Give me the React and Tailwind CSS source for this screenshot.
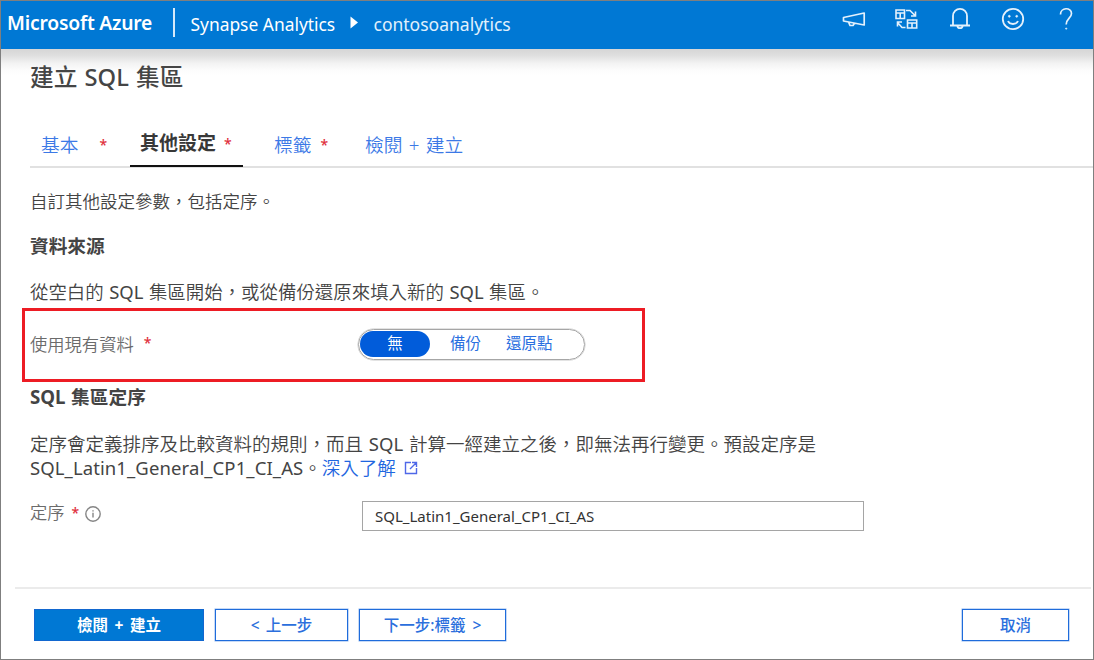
import React from 'react';

function MegaphoneIcon() {
  return (
    <svg width="26" height="22" viewBox="0 0 26 22" fill="none" stroke="#e4f1fc" strokeWidth="1.7" strokeLinejoin="round">
      <path d="M23.200 5V17L2.500 13V9.500ZM7.500 14L9 17.500H12L13.500 15.200" />
    </svg>
  );
}

function DirectoryIcon() {
  return (
    <svg width="24" height="22" viewBox="0 0 24 22" fill="none" stroke="#e4f1fc" strokeWidth="1.6">
      <path d="M2 2H10.500V10.500H2ZM2 5H10.500M6.200 5V10.500M13.5 12H22.7V20H13.5ZM13.5 15H22.7M18 15V20" />
      <path d="M12 2.500H16L21 7.500M21.500 3.500V8H17M11.500 19.500H8L4 15M3.500 18.500V14H8" />
    </svg>
  );
}

function BellIcon() {
  return (
    <svg width="22" height="24" viewBox="0 0 22 24" fill="none" stroke="#e4f1fc" strokeWidth="1.800">
      <path d="M4 18.5V9A7 7.200 0 0 1 18 9V18.5M1 18.5H21M8.3 19A2.8 3 0 0 0 13.7 19" />
    </svg>
  );
}

function SmileIcon() {
  return (
    <svg width="24" height="24" viewBox="0 0 24 24" fill="none" stroke="#e4f1fc" strokeWidth="1.800">
      <circle cx="12" cy="12" r="10.2" />
      <path d="M7 14C8.5 18 15.500 18 17 14" />
      <circle cx="8.300" cy="9.300" r="1" fill="#e4f1fc" strokeWidth="0.6" />
      <circle cx="15.700" cy="9.300" r="1" fill="#e4f1fc" strokeWidth="0.6" />
    </svg>
  );
}

function HelpIcon() {
  return (
    <svg width="16" height="24" viewBox="0 0 16 24" fill="none" stroke="#e4f1fc" strokeWidth="1.7">
      <path d="M2.500 7.500C2.500 0 13.500 0 13.500 6.500C13.500 11 8.200 11.500 8.200 17.500" />
      <circle cx="8.200" cy="21.600" r="0.7" fill="#e4f1fc" strokeWidth="0.6" />
    </svg>
  );
}

function ExternalIcon() {
  return (
    <svg className="ml-[8px] shrink-0" width="14" height="14" viewBox="0 0 14 14" fill="none" stroke="#4f68e8" strokeWidth="1.4">
      <path d="M7 1.500H1.500V12.500H12.500V7M8 1.500H12.500V6M12.500 1.500L6 8" />
    </svg>
  );
}

function InfoIcon() {
  return (
    <svg className="mt-[3px] shrink-0" width="16" height="16" viewBox="0 0 16 16" fill="none" stroke="#858585" strokeWidth="1.4">
      <circle cx="8" cy="8" r="7.200" />
      <path d="M8 6.800V11.500M8 4.300V5.500" />
    </svg>
  );
}

function Star({ className }) {
  return <span className={`font-medium text-[#e02f3c] text-[14px] ${className}`}>*</span>;
}

function Latin({ children }) {
  return <span className="font-normal">{children}</span>;
}

const outline =
  'flex h-8 items-center justify-center whitespace-pre border border-[#1f6cdb] bg-white text-[#2b6fdd] font-medium shadow-[0_0_0_0.5px_#8fb6ee]';

export default function App() {
  return (
    <div
      lang="zh-Hant-TW"
      className="flex h-[660px] w-[1094px] flex-col overflow-hidden border border-[#7f7f7f] bg-white font-['Noto_Sans','Noto_Sans_CJK_TC',sans-serif] text-[#444] whitespace-nowrap"
    >
      <header className="flex h-12 shrink-0 bg-[#0078d4] text-white">
        <div className="ml-[6px] h-[44px] w-[166px] text-[19.300px] font-semibold leading-[44px]">
          <span className="inline-block w-[146px] tracking-[-0.2px]">Microsoft Azure</span>
        </div>
        <div className="mt-[7px] h-[29px] w-[1.500px] bg-[#d5e9fa]" />
        <div className="ml-[16px] w-[148px] text-[17.400px] leading-[46px]">Synapse Analytics</div>
        <svg className="ml-[11px] mt-[15px]" width="9" height="13" viewBox="0 0 9 13" fill="white">
          <path d="M0.500 0.500L8 6.500L0.500 12.500Z" />
        </svg>
        <div className="ml-[15px] text-[17.500px] leading-[46px] text-[#e0f0fc]">contosoanalytics</div>
        <div className="ml-auto mr-[19px] flex h-[35px] items-center">
          <MegaphoneIcon />
          <div className="ml-[27px]"><DirectoryIcon /></div>
          <div className="ml-[31px]"><BellIcon /></div>
          <div className="ml-[30px]"><SmileIcon /></div>
          <div className="ml-[33px]"><HelpIcon /></div>
        </div>
      </header>

      <main className="flex h-[538px] shrink-0 flex-col bg-[linear-gradient(to_bottom,#d6d6d6_0px,#dedede_6px,#f2f2f2_14px,#fcfcfc_21px,#ffffff_27px)]">
        <h1 className="ml-[29px] h-[71px] shrink-0 text-[23.700px] font-medium leading-[57px] text-[#454545] [word-spacing:1px]">建立 SQL 集區</h1>

        <nav className="ml-[29px] flex h-12 shrink-0 border-b-2 border-[#e1e1e1] text-[18.700px] leading-[49px] text-[#3c79e6]">
          <div className="ml-[11px] flex w-[89px] font-[350]">
            基本<Star className="ml-[21px]" />
          </div>
          <div className="-mb-px flex h-[47px] w-[113px] border-b-2 border-[#111] pl-[10px] text-[19px] font-bold leading-[47px] text-[#383838]">
            其他設定<Star className="ml-[8px]" />
          </div>
          <div className="ml-[31px] flex w-[91px] font-[350]">
            標籤<Star className="ml-[9px]" />
          </div>
          <div className="font-[350] [word-spacing:1.500px]">檢閱 + 建立</div>
        </nav>

        <p className="ml-[29px] h-[55px] shrink-0 pt-[21px] text-[17.500px] font-[350] leading-[24px]">自訂其他設定參數，包括定序。</p>
        <h2 className="ml-[29px] h-[44px] shrink-0 text-[18.700px] font-bold leading-[45px]">資料來源</h2>
        <p className="ml-[29px] h-[41px] shrink-0 text-[18.450px] font-[350] leading-[50px] [word-spacing:0.700px]">
          從空白的 <Latin>SQL</Latin> 集區開始，或從備份還原來填入新的 <Latin>SQL</Latin> 集區。
        </p>

        <section className="ml-[21px] flex h-[74px] w-[623px] shrink-0 items-center border-[3px] border-[#ed1c24]">
          <div className="ml-[5px] flex w-[328px] text-[17.300px] font-[350] text-[#6b6b6b]">
            使用現有資料<Star className="ml-[10px]" />
          </div>
          <div className="mb-[2px] flex h-[31px] w-[227px] items-center rounded-full border border-[#a6a6a6] p-px text-[15.500px] text-[#2a6fe0] shadow-[0_0_0_0.5px_#c8c8c8]">
            <div className="flex h-[26px] w-[70px] items-center justify-center rounded-full bg-[#015cda] text-white">無</div>
            <div className="ml-[20px]">備份</div>
            <div className="ml-[25px]">還原點</div>
          </div>
        </section>

        <h2 className="ml-[29px] h-[50px] shrink-0 text-[18.700px] font-bold leading-[29px] [word-spacing:0.700px]">SQL 集區定序</h2>
        <div className="ml-[29px] h-[67px] shrink-0 text-[18.500px] font-[350] leading-6">
          <p className="[word-spacing:1px]">
            定序會定義排序及比較資料的規則，而且 <Latin>SQL</Latin> 計算一經建立之後，即無法再行變更。預設定序是
          </p>
          <p className="flex items-center">
            <span className="font-normal tracking-[0.100px]">SQL_Latin1_General_CP1_CI_AS</span>。<a className="text-[#1f66e0]">深入了解</a>
            <ExternalIcon />
          </p>
        </div>
        <div className="ml-[29px] flex h-8 shrink-0">
          <div className="flex h-[27px] w-[332px] items-center text-[17.300px] font-[350] text-[#6b6b6b]">
            定序<Star className="ml-[7px] mr-[6px]" />
            <InfoIcon />
          </div>
          <div className="mt-[2px] h-[30px] w-[502px] border border-[#a5a5a5] bg-white pl-[12px] text-[15px] leading-[28px] text-[#333]">
            SQL_Latin1_General_CP1_CI_AS
          </div>
        </div>
      </main>

      <footer className="ml-[14px] mr-[2px] flex h-[72px] shrink-0 border-t-2 border-[#ebebeb] pt-5 text-[15.500px]">
        <button className="ml-[19px] flex h-8 w-[170px] items-center justify-center whitespace-pre border border-[#1267cf] bg-[#0078d4] pt-px font-bold text-white [word-spacing:2.500px]">檢閱 + 建立</button>
        <button className={`ml-[11px] w-[133px] pt-px [word-spacing:2px] ${outline}`}>{'< 上一步'}</button>
        <button className={`ml-[11px] w-[147px] pt-px [word-spacing:3px] ${outline}`}>{'下一步:標籤 >'}</button>
        <button className={`ml-auto mr-[22px] w-[107px] pt-px ${outline}`}>取消</button>
      </footer>
    </div>
  );
}
